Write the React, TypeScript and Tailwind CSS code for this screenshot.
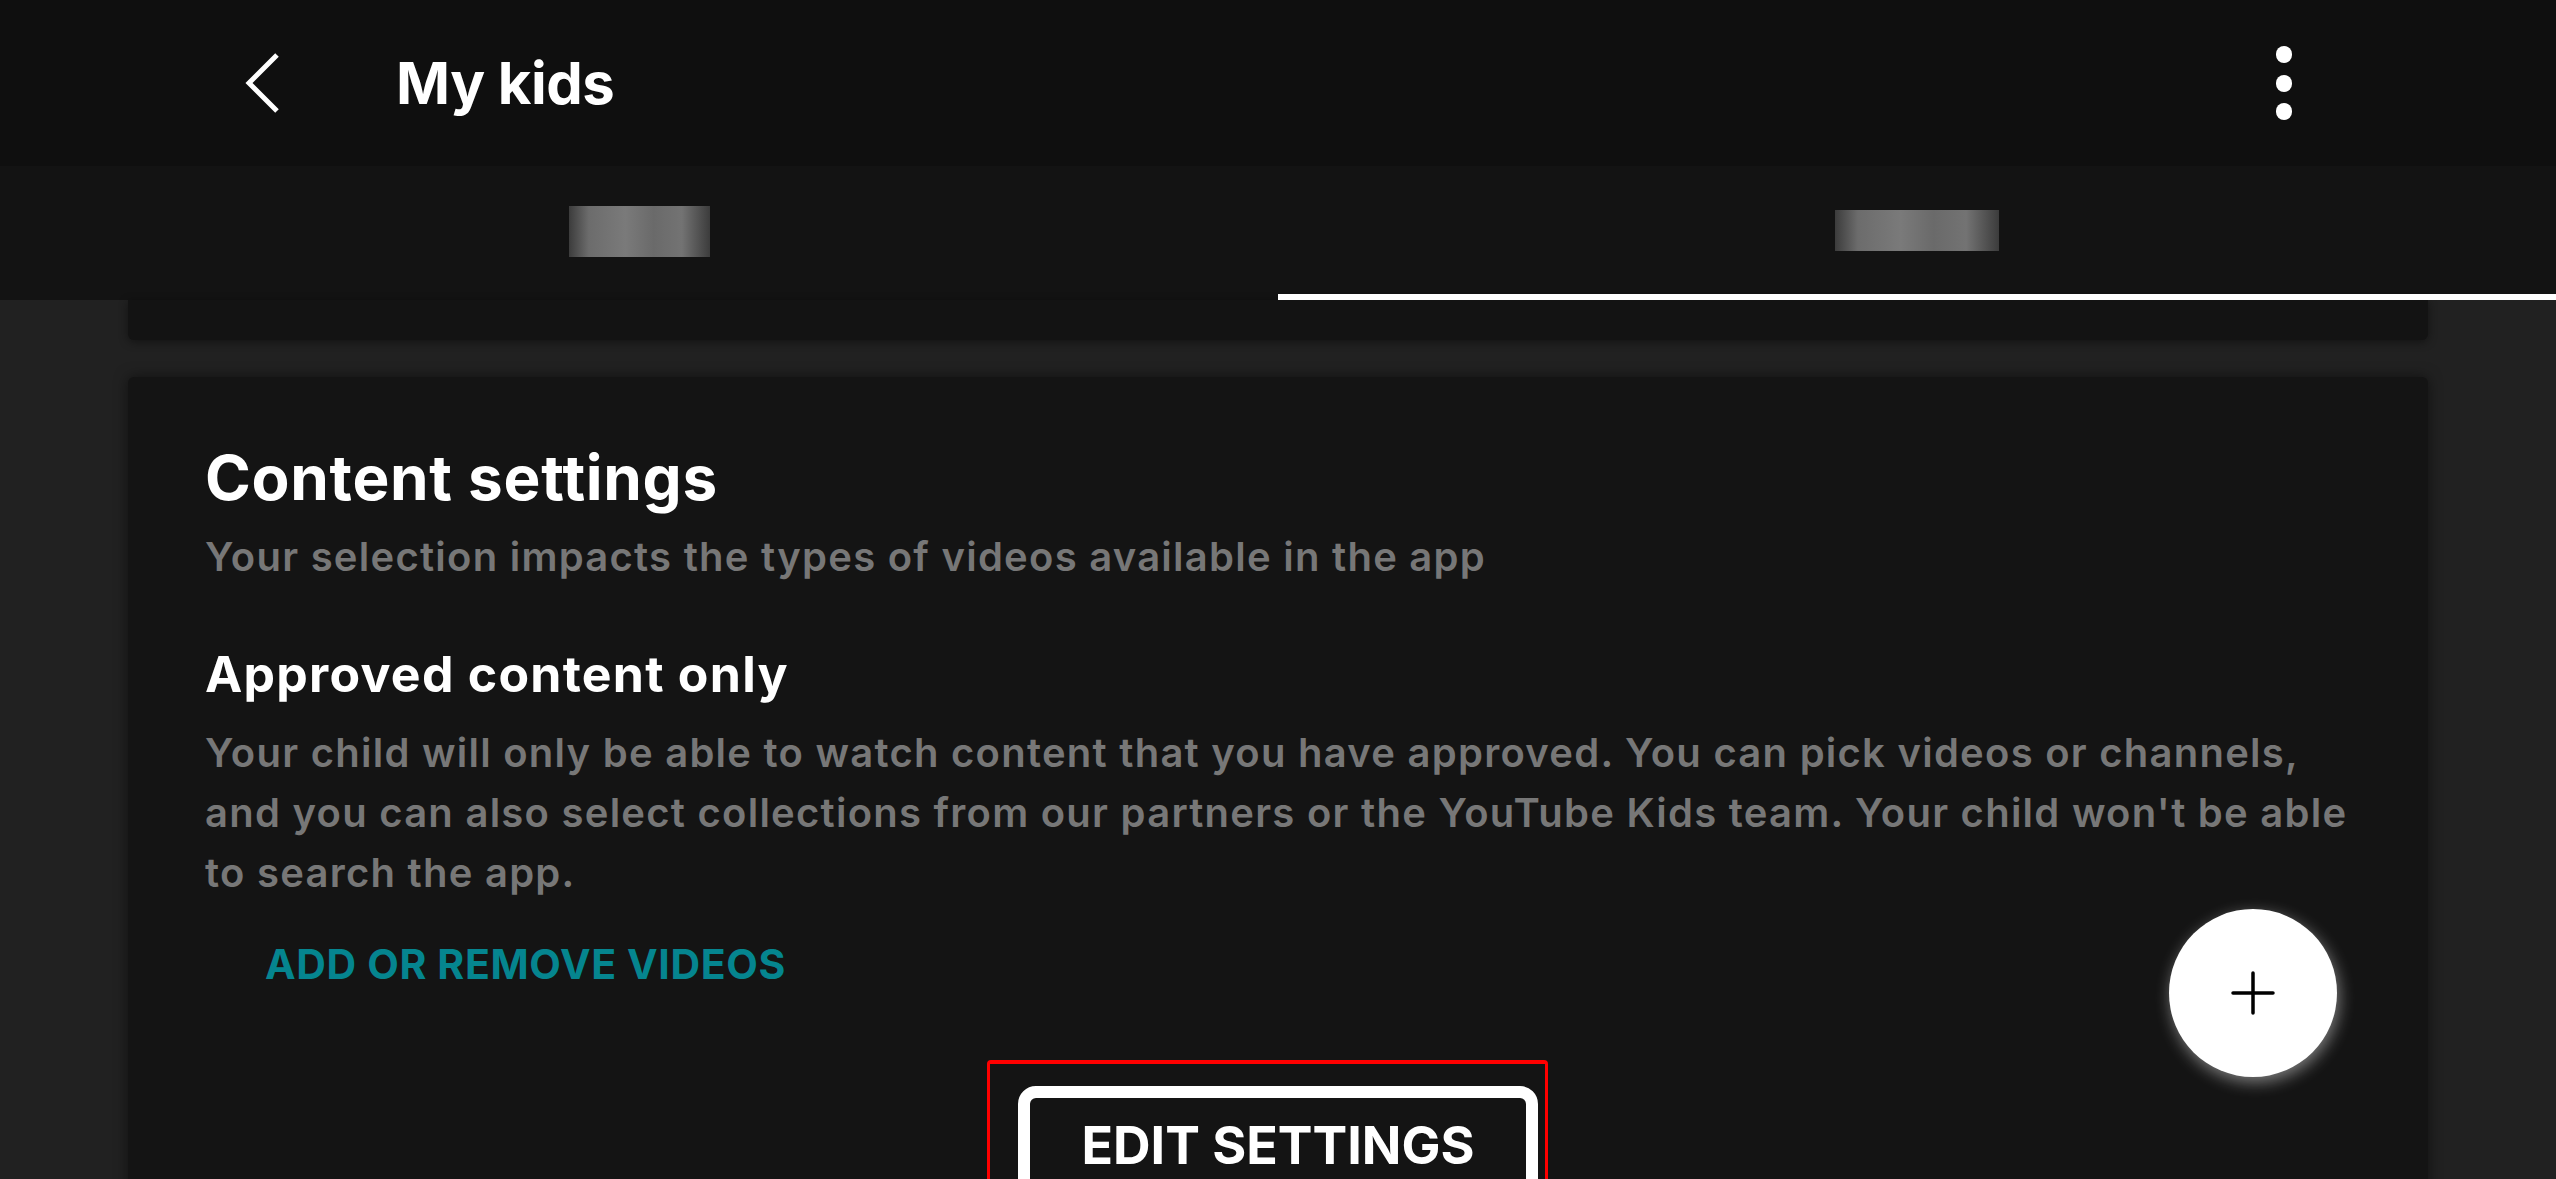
import React from "react"

function BlurLabel({ w, h }: { w: string; h: string }) {
    // tab names are blurred out in the source
    return (
        <div className={`${w} ${h} bg-[linear-gradient(90deg,#3c3c3c,#6c6c6c_14%,#7a7a7a_40%,#6a6a6a_60%,#737373_80%,#3c3c3c)]`} />
    )
}

export default function App() {
    return (
        <div className="h-[1179px] w-full overflow-hidden bg-[#212121] font-['Inter','Noto_Sans',sans-serif] flex flex-col">
            {/* Top bar */}
            <header className="h-[166px] shrink-0 bg-[#0f0f0f] flex items-center pl-[244px] pr-[264px]">
                <svg width="36" height="60" viewBox="0 0 36 60" fill="none" className="shrink-0">
                    <path d="M33 2 L5 30 L33 58" stroke="white" strokeWidth="5" strokeLinejoin="miter" />
                </svg>
                <h1 className="ml-[116px] text-[58px] font-bold text-white leading-none tracking-[-0.5px]">My kids</h1>
                <div className="ml-auto flex flex-col gap-[11.5px]">
                    <div className="w-4 h-[17px] rounded-full bg-white" />
                    <div className="w-4 h-[17px] rounded-full bg-white" />
                    <div className="w-4 h-[17px] rounded-full bg-white" />
                </div>
            </header>

            {/* Tabs */}
            <nav className="h-[134px] shrink-0 bg-[#131313] grid grid-cols-2">
                <div className="flex items-center justify-center pb-[4px]">
                    <BlurLabel w="w-[141px]" h="h-[51px]" />
                </div>
                <div className="relative flex items-center justify-center pb-[6px]">
                    <BlurLabel w="w-[164px]" h="h-[41px]" />
                    <div className="absolute left-0 right-0 bottom-0 h-[6px] bg-white" />
                </div>
            </nav>

            <main className="flex-1 min-h-0 pl-[128px] pr-[128px] flex flex-col">
                <div className="h-[40px] shrink-0 bg-[#131313] rounded-b-[6px] shadow-[0_2px_10px_rgba(0,0,0,0.45)]" />

                <section className="relative mt-[37px] flex-1 bg-[#141414] rounded-t-[6px] shadow-[0_0_14px_rgba(0,0,0,0.5)] pt-[64px] px-[77px]">
                    <h2 className="text-[62px] leading-[74px] font-bold text-white tracking-[0.7px]">Content settings</h2>
                    <p className="mt-[18px] text-[40px] leading-[48px] font-semibold text-[#777777] tracking-[1.25px]">
                        Your selection impacts the types of videos available in the app
                    </p>

                    <h3 className="mt-[63px] text-[50px] leading-[60px] font-bold text-white tracking-[1.25px]">Approved content only</h3>
                    <p className="mt-[19px] text-[40px] leading-[60px] font-semibold text-[#777777] tracking-[1.25px]">
                        Your child will only be able to watch content that you have approved. You can pick videos or channels, and you can also select collections from our partners or the YouTube Kids team. Your child won't be able to search the app.
                    </p>

                    <div className="mt-[36px] pl-[60px] text-[41px] leading-[50px] font-bold text-[#05858f] tracking-[0.65px]">ADD OR REMOVE VIDEOS</div>

                    <div className="mt-[97px] flex justify-center">
                        <div className="relative">
                            <div className="absolute -left-[31px] -right-[10px] -top-[26px] -bottom-[40px] border-[3px] border-t-[4px] border-[#ff0000] rounded-[4px]" />
                            <button className="w-[520px] border-[12px] border-white rounded-[18px] bg-[#141414] pt-[17px] pb-[17px] text-[52px] leading-[62px] font-bold text-white">
                                EDIT SETTINGS
                            </button>
                        </div>
                    </div>

                    {/* floating add button */}
                    <div className="absolute right-[91px] top-[532px] w-[168px] h-[168px] rounded-full bg-white flex items-center justify-center shadow-[2px_5px_16px_rgba(255,255,255,0.45)]">
                        <svg width="44" height="44" viewBox="0 0 44 44" fill="none">
                            <path d="M22 2 V42 M2 22 H42" stroke="black" strokeWidth="3.5" strokeLinecap="round" />
                        </svg>
                    </div>
                </section>
            </main>
        </div>
    )
}
